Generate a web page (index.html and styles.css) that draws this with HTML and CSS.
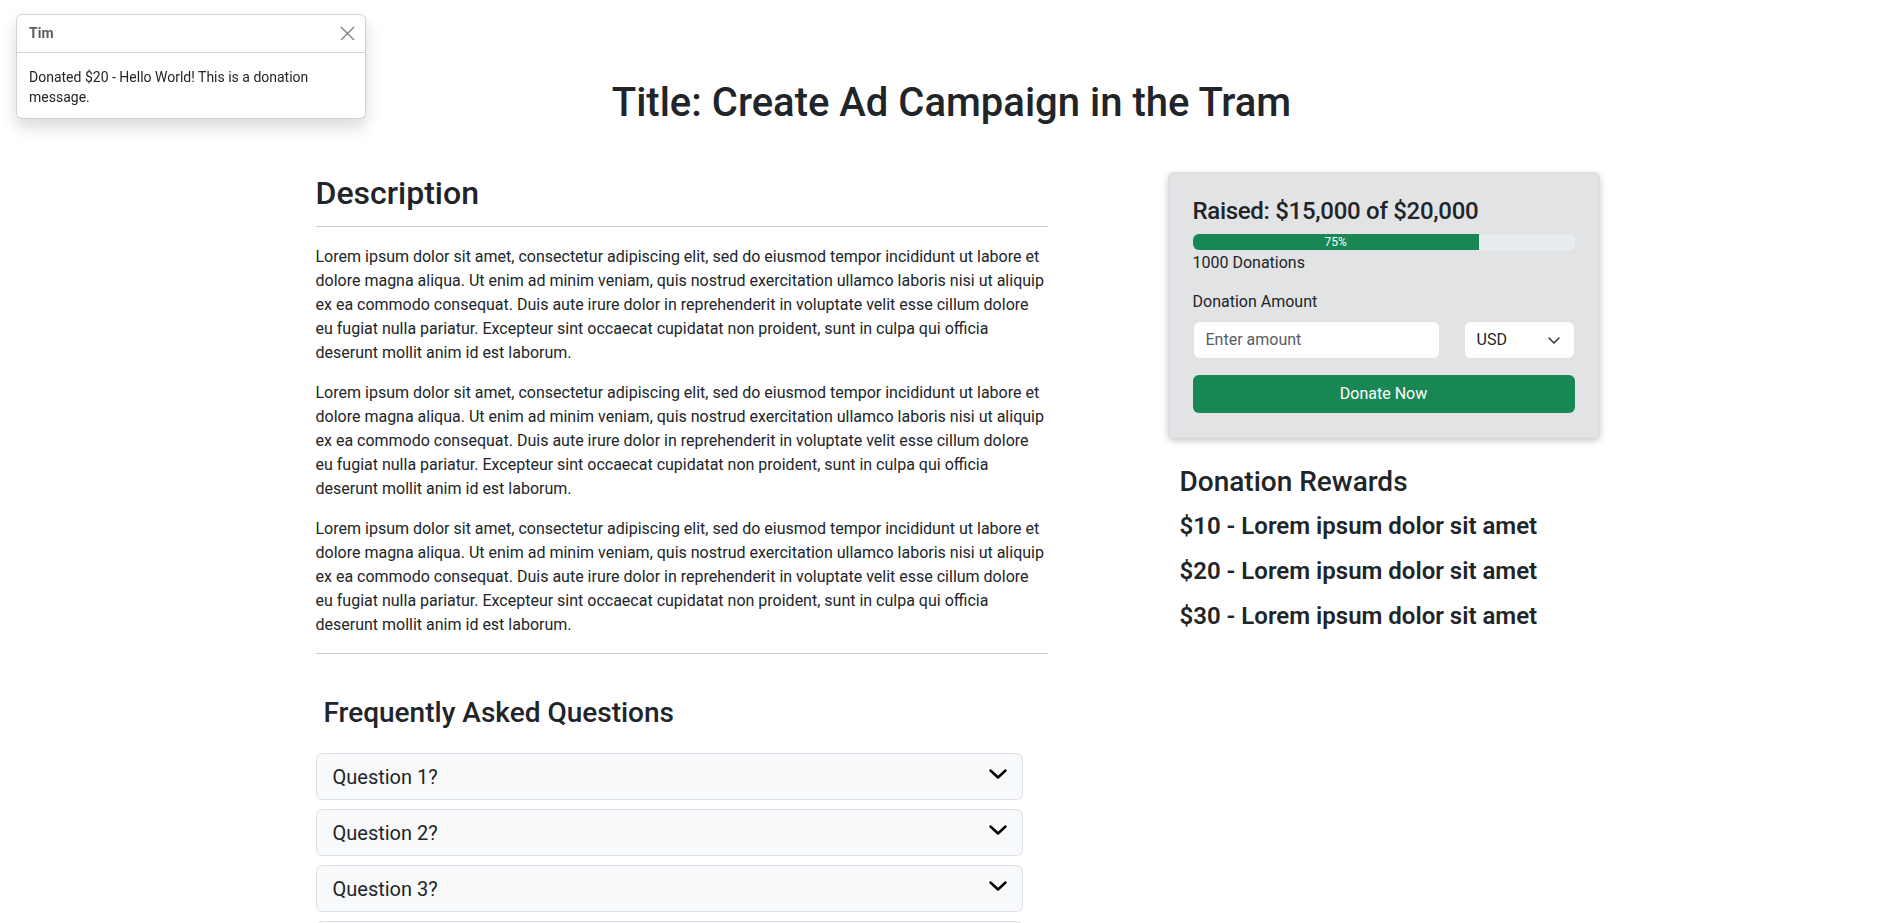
FILE: index.html
```html
<!DOCTYPE html>
<html lang="en">
<head>
<meta charset="utf-8">
<title>Create Ad Campaign in the Tram</title>
<link rel="stylesheet" href="styles.css">
</head>
<body>
<div class="toast">
  <div class="toast-header">
    <strong class="toast-name">Tim</strong>
    <button class="toast-close" type="button" aria-label="Close">
      <svg width="15" height="15" viewBox="0 0 15 15"><path d="M1 1L14 14M14 1L1 14" stroke="#000" stroke-width="1.4" fill="none"/></svg>
    </button>
  </div>
  <div class="toast-body">Donated $20 - Hello World! This is a donation message.</div>
</div>

<main class="container">
  <h1 class="page-title">Title: Create Ad Campaign in the Tram</h1>
  <div class="row">
    <div class="col-main">
      <h2 class="section-title">Description</h2>
      <hr class="rule rule-top">
      <p>Lorem ipsum dolor sit amet, consectetur adipiscing elit, sed do eiusmod tempor incididunt ut labore et dolore magna aliqua. Ut enim ad minim veniam, quis nostrud exercitation ullamco laboris nisi ut aliquip ex ea commodo consequat. Duis aute irure dolor in reprehenderit in voluptate velit esse cillum dolore eu fugiat nulla pariatur. Excepteur sint occaecat cupidatat non proident, sunt in culpa qui officia deserunt mollit anim id est laborum.</p>
      <p>Lorem ipsum dolor sit amet, consectetur adipiscing elit, sed do eiusmod tempor incididunt ut labore et dolore magna aliqua. Ut enim ad minim veniam, quis nostrud exercitation ullamco laboris nisi ut aliquip ex ea commodo consequat. Duis aute irure dolor in reprehenderit in voluptate velit esse cillum dolore eu fugiat nulla pariatur. Excepteur sint occaecat cupidatat non proident, sunt in culpa qui officia deserunt mollit anim id est laborum.</p>
      <p>Lorem ipsum dolor sit amet, consectetur adipiscing elit, sed do eiusmod tempor incididunt ut labore et dolore magna aliqua. Ut enim ad minim veniam, quis nostrud exercitation ullamco laboris nisi ut aliquip ex ea commodo consequat. Duis aute irure dolor in reprehenderit in voluptate velit esse cillum dolore eu fugiat nulla pariatur. Excepteur sint occaecat cupidatat non proident, sunt in culpa qui officia deserunt mollit anim id est laborum.</p>
      <hr class="rule rule-bottom">

      <section class="faq">
        <h3 class="faq-title">Frequently Asked Questions</h3>
        <div class="accordion">
          <div class="acc-item"><span class="acc-q">Question 1?</span><svg class="acc-chev" width="18" height="10" viewBox="0 0 18 10"><path d="M1.5 1.5L9 8.5L16.5 1.5" stroke="#000" stroke-width="2.4" fill="none" stroke-linecap="round" stroke-linejoin="round"/></svg></div>
          <div class="acc-item"><span class="acc-q">Question 2?</span><svg class="acc-chev" width="18" height="10" viewBox="0 0 18 10"><path d="M1.5 1.5L9 8.5L16.5 1.5" stroke="#000" stroke-width="2.4" fill="none" stroke-linecap="round" stroke-linejoin="round"/></svg></div>
          <div class="acc-item"><span class="acc-q">Question 3?</span><svg class="acc-chev" width="18" height="10" viewBox="0 0 18 10"><path d="M1.5 1.5L9 8.5L16.5 1.5" stroke="#000" stroke-width="2.4" fill="none" stroke-linecap="round" stroke-linejoin="round"/></svg></div>
          <div class="acc-item"><span class="acc-q">Question 4?</span><svg class="acc-chev" width="18" height="10" viewBox="0 0 18 10"><path d="M1.5 1.5L9 8.5L16.5 1.5" stroke="#000" stroke-width="2.4" fill="none" stroke-linecap="round" stroke-linejoin="round"/></svg></div>
        </div>
      </section>
    </div>

    <aside class="col-side">
      <div class="donate-card">
        <h4 class="raised">Raised: $15,000 of $20,000</h4>
        <div class="progress"><div class="progress-bar" style="width: 75%">75%</div></div>
        <div class="donations-count">1000 Donations</div>
        <label class="amount-label" for="amount">Donation Amount</label>
        <div class="amount-row">
          <input id="amount" class="amount-input" type="text" placeholder="Enter amount">
          <div class="currency-select">
            <span>USD</span>
            <svg width="16" height="16" viewBox="0 0 16 16"><path d="M3 6l5 5 5-5" stroke="#343a40" stroke-width="1.6" fill="none" stroke-linecap="round" stroke-linejoin="round"/></svg>
          </div>
        </div>
        <button class="donate-btn" type="button">Donate Now</button>
      </div>

      <div class="rewards">
        <h3 class="rewards-title">Donation Rewards</h3>
        <h4 class="reward">$10 - Lorem ipsum dolor sit amet</h4>
        <h4 class="reward">$20 - Lorem ipsum dolor sit amet</h4>
        <h4 class="reward">$30 - Lorem ipsum dolor sit amet</h4>
      </div>
    </aside>
  </div>
</main>
</body>
</html>
```
FILE: styles.css
```css
* { box-sizing: border-box; }

html, body {
  margin: 0;
  padding: 0;
}

body {
  font-family: Roboto, "Liberation Sans", Arial, sans-serif;
  font-size: 16px;
  line-height: 1.5;
  color: #212529;
  background: #fff;
}

/* Toast */
.toast {
  position: fixed;
  top: 14px;
  left: 16px;
  width: 350px;
  background: rgba(255, 255, 255, 0.95);
  border: 1px solid rgba(0, 0, 0, 0.175);
  border-radius: 6px;
  box-shadow: 0 8px 16px rgba(0, 0, 0, 0.15);
  font-size: 14px;
  z-index: 10;
}

.toast-header {
  display: flex;
  align-items: center;
  justify-content: space-between;
  padding: 8px 12px;
  line-height: 21px;
  border-bottom: 1px solid rgba(0, 0, 0, 0.175);
  color: #595c5f;
}

.toast-name {
  font-weight: 700;
}

.toast-close {
  display: flex;
  align-items: center;
  justify-content: center;
  width: 21px;
  height: 21px;
  margin-right: -5px;
  padding: 0;
  border: 0;
  background: transparent;
  opacity: 0.5;
}

.toast-body {
  padding: 14px 12px 11px;
  line-height: 20px;
  color: #212529;
}

/* Layout */
.container {
  width: 1296px;
  margin: 0 auto;
  padding-top: 79px;
}

.page-title {
  margin: 0 0 45px;
  font-size: 40px;
  font-weight: 500;
  line-height: 1.2;
  text-align: center;
}

.row {
  display: flex;
  align-items: flex-start;
}

.col-main {
  width: 756px;
  padding: 0 12px;
  flex: none;
}

.col-side {
  width: 432px;
  margin-left: 108px;
  flex: none;
}

.section-title {
  margin: 2px 0 0;
  font-size: 32px;
  font-weight: 500;
  line-height: 1.2;
}

.rule {
  border: 0;
  border-top: 1px solid #c8c9ca;
  height: 0;
}

.rule-top {
  margin: 14px 0 18px;
}

.rule-bottom {
  margin: 0;
}

.col-main p {
  margin: 0 0 16px;
}

/* FAQ */
.faq {
  padding-top: 42px;
  padding-right: 25px;
}

.faq-title {
  margin: 0 0 23px;
  padding-left: 8px;
  font-size: 28px;
  font-weight: 500;
  line-height: 1.2;
}

.acc-item {
  display: flex;
  justify-content: space-between;
  align-items: center;
  height: 47px;
  margin-bottom: 9px;
  padding: 0 15px 0 16px;
  background: #f8f9fa;
  border: 1px solid #dee2e6;
  border-radius: 6px;
}

.acc-q {
  font-size: 20px;
  line-height: 1.5;
  padding-top: 2px;
}

.acc-chev {
  align-self: flex-start;
  margin-top: 15px;
}

/* Donation card */
.donate-card {
  padding: 24px;
  background: #e2e3e5;
  border: 1px solid #dcdde0;
  border-radius: 6px;
  box-shadow: 0 3px 7px rgba(0, 0, 0, 0.22);
}

.raised {
  margin: 0 0 8px;
  font-size: 24px;
  font-weight: 500;
  line-height: 1.2;
  letter-spacing: -0.3px;
}

.progress {
  height: 16px;
  background: #e9ecef;
  border-radius: 6px;
  overflow: hidden;
  display: flex;
}

.progress-bar {
  background: #198754;
  color: #fff;
  font-size: 12px;
  line-height: 16px;
  text-align: center;
}

.donations-count {
  line-height: 24px;
  padding-top: 1px;
}

.amount-label {
  display: block;
  margin: 15px 0 8px;
  line-height: 24px;
}

.amount-row {
  display: flex;
  align-items: center;
}

.amount-input {
  width: 245px;
  height: 36px;
  margin-left: 1px;
  padding: 6px 12px;
  border: 0;
  border-radius: 6px;
  background: #fff;
  font-family: inherit;
  font-size: 16px;
  color: #212529;
  outline: none;
}

.amount-input::placeholder {
  color: #595c5f;
}

.currency-select {
  display: flex;
  align-items: center;
  justify-content: space-between;
  width: 109px;
  height: 36px;
  margin-left: 26px;
  padding: 0 12px;
  background: #fff;
  border-radius: 6px;
}

.donate-btn {
  display: block;
  width: 100%;
  height: 38px;
  margin-top: 17px;
  padding: 0;
  border: 0;
  border-radius: 6px;
  background: #198754;
  color: #fff;
  font-family: inherit;
  font-size: 16px;
  line-height: 38px;
}

/* Rewards */
.rewards {
  padding: 27px 12px 0;
}

.rewards-title {
  margin: 0 0 14px;
  font-size: 28px;
  font-weight: 500;
  line-height: 1.2;
}

.reward {
  margin: 0 0 16px;
  font-size: 24px;
  font-weight: 600;
  line-height: 1.2;
}
```
